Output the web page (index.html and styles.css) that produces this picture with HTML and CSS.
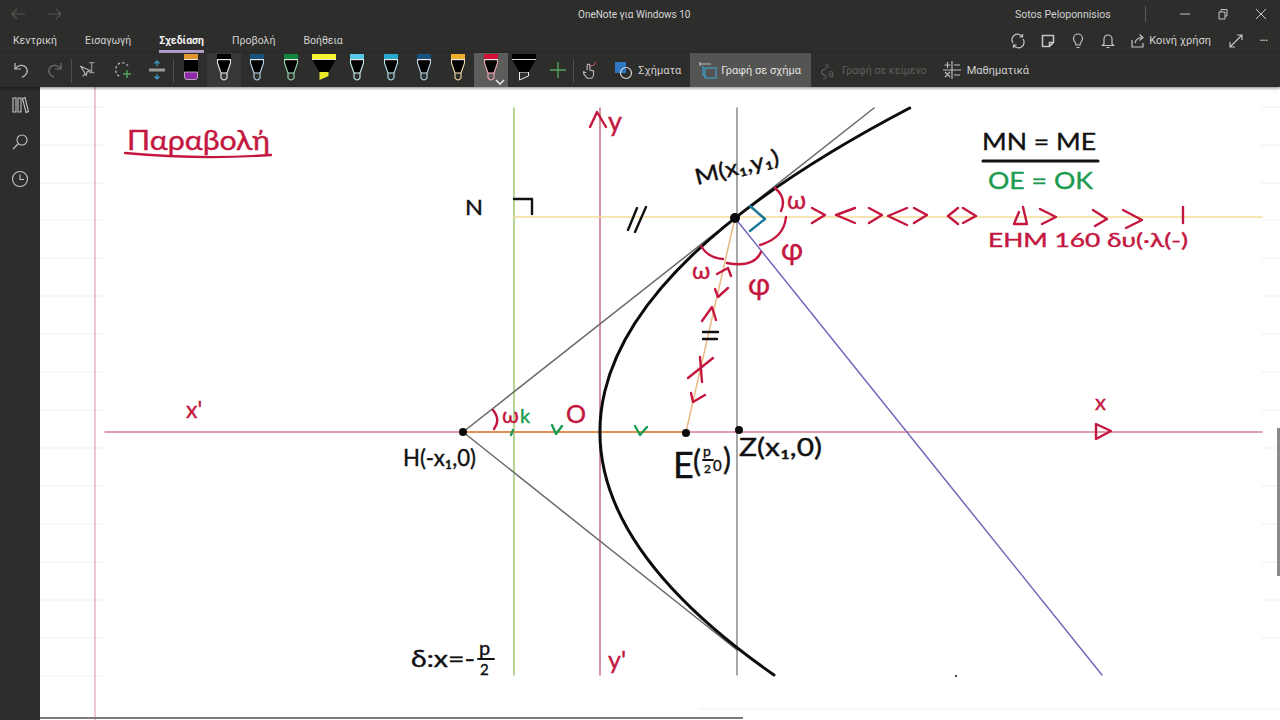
FILE: index.html
```html
<!DOCTYPE html>
<html lang="el">
<head>
<meta charset="utf-8">
<title>OneNote για Windows 10</title>
<link rel="stylesheet" href="styles.css">
</head>
<body>
<svg class="defs" width="0" height="0" aria-hidden="true">
  <symbol id="pen" viewBox="0 0 14 27">
    <path class="pen-body" d="M.5 6H13.500V9L10 19H4L.5 9Z"/>
    <path class="pen-side" d="M.5 6V9L4 19V24Q7 28 10 24V19L13.500 9V6"/>
    <path class="pen-side" d="M4 19H10"/>
    <rect class="pen-cap" x="0" y="0" width="14" height="5"/>
    <rect class="pen-band" x="0" y="5" width="14" height="1.200"/>
  </symbol>
  <symbol id="marker" viewBox="0 0 24 27">
    <path class="pen-tip" d="M7.500 18H16.500V22L7.500 26Z"/>
    <path class="pen-body" d="M0 5H24L17 18H7Z"/>
    <rect class="pen-cap" x="0" y="0" width="24" height="5"/>
    <rect class="pen-band" x="0" y="5" width="24" height="1"/>
  </symbol>
</svg>

<div class="app">
  <header class="titlebar">
    <div class="nav">
      <svg class="ico dim" viewBox="0 0 16 16"><path d="M15 8H2M7 3 2 8l5 5"/></svg>
      <svg class="ico dim" viewBox="0 0 16 16"><path d="M1 8h13M9 3l5 5-5 5"/></svg>
    </div>
    <div class="title">OneNote για Windows 10</div>
    <div class="user">Sotos Peloponnisios</div>
    <div class="title-sep"></div>
    <div class="winbtns">
      <svg class="ico-s" viewBox="0 0 12 12"><path d="M1 6h10"/></svg>
      <svg class="ico-s" viewBox="0 0 12 12"><path d="M2 4h6v7H2zM4 4V1.500h6V8H8"/></svg>
      <svg class="ico-s" viewBox="0 0 12 12"><path d="M1 1l10 10M11 1 1 11"/></svg>
    </div>
  </header>

  <div class="tabbar">
    <nav class="tabs">
      <span class="tab">Κεντρική</span>
      <span class="tab">Εισαγωγή</span>
      <span class="tab active">Σχεδίαση</span>
      <span class="tab">Προβολή</span>
      <span class="tab">Βοήθεια</span>
    </nav>
    <div class="actions">
      <svg class="ico-a" viewBox="0 0 16 16"><path d="M3 10A5.500 5.500 0 0 1 12 3.500M13 6a5.500 5.500 0 0 1-9 6.500M12.500 1v3h-3M3.500 15v-3h3"/></svg>
      <svg class="ico-a" viewBox="0 0 16 16"><path class="heavy" d="M2.500 2.500h11v7l-4 4h-7zM13.500 9.500h-4v4"/></svg>
      <svg class="ico-a" viewBox="0 0 16 16"><path d="M6 12C6 9 3.500 8.500 3.500 5.500a4.500 4.500 0 0 1 9 0C12.500 8.500 10 9 10 12zM6.500 14.500h3"/></svg>
      <svg class="ico-a" viewBox="0 0 16 16"><path d="M4 11V6a4 4 0 0 1 8 0v5l1.500 1.500h-11zM6.500 14.500h3"/></svg>
      <span class="share">
        <svg class="ico-a" viewBox="0 0 16 16"><path d="M2 7v7h11v-4M5 10c1-4 4-5.500 7-5.500M9.500 1.500l3.500 3-3.500 3"/></svg>
        <span>Κοινή χρήση</span>
      </span>
      <svg class="ico-a expand" viewBox="0 0 16 16"><path d="M2 14 14 2M9 2H14V7M2 9V14H7"/></svg>
      <span class="more">•••</span>
    </div>
  </div>

  <div class="toolbar">
    <span class="tool"><svg class="ico-t" viewBox="0 0 20 20"><path d="M4 3v6h6M4 9c3-4 8-5 11-1.500 3 4 .5 7.500-4 10"/></svg></span>
    <span class="tool off"><svg class="ico-t" viewBox="0 0 20 20"><path d="M16 3v6h-6M16 9C13 5 8 4 5 7.500c-3 4-.5 7.500 4 10"/></svg></span>
    <span class="sep"></span>
    <span class="tool"><svg class="ico-t" viewBox="0 0 22 20"><path d="M2 6l6 10 1-4 4-1zM4 17l3-3"/><path d="M11 2h6M14 2v11M11 13h6" class="fine"/></svg></span>
    <span class="tool"><svg class="ico-t" viewBox="0 0 20 20"><path class="dash" d="M15 6A6.500 6.500 0 0 0 3 8c-1 4 1 8 5 9"/><path class="plus-g" d="M14 10v8M10 14h8"/></svg></span>
    <span class="tool"><svg class="ico-t" viewBox="0 0 20 20"><path class="blue" d="M10 1v5M7.500 3.500 10 1l2.500 2.500M10 19v-5M7.500 16.500 10 19l2.500-2.500"/><path class="thick" d="M2 10h16"/></svg></span>
    <span class="sep"></span>
    <span class="tool pen-slot"><svg class="eraser" viewBox="0 0 14 26"><rect class="er-top" x="0" y="0" width="14" height="5"/><rect class="pen-band" x="0" y="5" width="14" height="1"/><rect class="er-mid" x="0" y="6" width="14" height="12"/><path class="er-bot" d="M.5 18h13v5q0 2.500-2.500 2.500H3Q.5 25.500.5 23z"/></svg></span>
    <span class="tool pen-slot hover"><svg class="pen c-black"><use href="#pen"/></svg></span>
    <span class="tool pen-slot"><svg class="pen c-navy"><use href="#pen"/></svg></span>
    <span class="tool pen-slot"><svg class="pen c-green"><use href="#pen"/></svg></span>
    <span class="tool pen-slot"><svg class="marker c-yellow"><use href="#marker"/></svg></span>
    <span class="tool pen-slot"><svg class="pen c-sky"><use href="#pen"/></svg></span>
    <span class="tool pen-slot"><svg class="pen c-cyan"><use href="#pen"/></svg></span>
    <span class="tool pen-slot"><svg class="pen c-navy"><use href="#pen"/></svg></span>
    <span class="tool pen-slot"><svg class="pen c-gold"><use href="#pen"/></svg></span>
    <span class="tool pen-slot selected"><svg class="pen c-red"><use href="#pen"/></svg><svg class="caret" viewBox="0 0 10 6"><path d="M1 1l4 4 4-4"/></svg></span>
    <span class="tool pen-slot"><svg class="marker c-black"><use href="#marker"/></svg></span>
    <span class="tool plus-slot"><svg class="ico-t plus-g" viewBox="0 0 20 20"><path d="M10 2v16M2 10h16"/></svg></span>
    <span class="sep"></span>
    <span class="tool touch"><svg class="ico-t" viewBox="0 0 20 22"><path class="red-stroke" d="M11 6c3 1 6-1 6-4"/><path d="M8 11V6a1.500 1.500 0 0 1 3 0v5l4 1v5l-2 3H8l-4-5v-2l3 1"/></svg></span>
    <span class="btn shapes">
      <svg class="ico-t" viewBox="0 0 20 20"><rect class="fill-blue" x="2" y="2" width="11" height="11"/><circle class="circ" cx="13" cy="13" r="5.500"/></svg>
      <span>Σχήματα</span>
    </span>
    <span class="btn on">
      <svg class="ico-t" viewBox="0 0 20 20"><path d="M2 4h11M2 2v4"/><rect class="blue" x="7" y="8" width="11" height="10"/><path class="blue" d="M5 6v7c0 2 1 3 3 3"/></svg>
      <span>Γραφή σε σχήμα</span>
    </span>
    <span class="btn disabled">
      <svg class="ico-t" viewBox="0 0 20 20"><path d="M8 9C3 9 2 14 6 15c3 1 2 4-1 4"/><text class="a1" x="7" y="8">a</text><text class="a2" x="10" y="16.500">a</text></svg>
      <span>Γραφή σε κείμενο</span>
    </span>
    <span class="btn math">
      <svg class="ico-t" viewBox="0 0 20 20"><path d="M10 1v18M1 10h18M5.500 2v6M2.500 5h6M12 5h6M3 12l5 5M8 12l-5 5M12 15h6"/></svg>
      <span>Μαθηματικά</span>
    </span>
  </div>

  <main class="main">
    <aside class="sidebar">
      <svg class="ico-b" viewBox="0 0 18 18"><path d="M2 2h3v14H2zM7 2h3v14H7zM11.500 2.500l2.500-1 3.500 14-2.500 1z"/></svg>
      <svg class="ico-b" viewBox="0 0 18 18"><circle cx="11" cy="7" r="5"/><path d="M7.500 10.500 2 16"/></svg>
      <svg class="ico-b" viewBox="0 0 18 18"><circle cx="9" cy="9" r="7.500"/><path d="M9 4.500V9.500h4"/></svg>
    </aside>

    <section class="page">
      <svg class="sheet" viewBox="40 87 1240 633" role="img" aria-label="Παραβολή">
        <path class="rule" d="M40 107H105M40 145H105M40 183H105M40 220H105M40 258H105M40 296H105M40 334H105M40 372H105M40 410H105M40 448H105M40 486H105M40 524H105M40 562H105M40 600H105M40 638H105M40 676H105M1262 107H1280M1262 145H1280M1262 183H1280M1262 220H1280M1262 258H1280M1262 296H1280M1262 334H1280M1262 372H1280M1262 410H1280M1262 448H1280M1262 486H1280M1262 524H1280M1262 562H1280M1262 600H1280M1262 638H1280M700 709H1280"/>
        <path class="margin" d="M95 87V720"/>

        <path class="l-green" d="M514 108V675"/>
        <path class="l-red" d="M600 108V675"/>
        <path class="l-gray" d="M737 108V675"/>
        <path class="l-yellow" d="M514 217H1262"/>
        <path class="l-axis" d="M105 432H1262"/>
        <path class="l-purple" d="M735 218 1102 675"/>
        <path class="l-orange" d="M463 432H686"/>
        <path class="l-tan" d="M686 432 735 218"/>
        <path class="l-tangent" d="M463 432 874 108M463 432 737 650"/>
        <path class="l-curve" d="M909.700 108Q367.700 391.500 774 675"/>

        <circle class="dot" cx="735" cy="218" r="5"/>
        <circle class="dot" cx="463" cy="432" r="4"/>
        <circle class="dot" cx="686" cy="433" r="4"/>
        <circle class="dot" cx="739" cy="430" r="4"/>
        <circle class="dot" cx="956" cy="676" r="1"/>

        <path class="ink-red" d="M812 208 825 215 812 223M855 208 836 215 855 223M869 208 882 215 869 223M907 208 888 216 907 225M914 208 927 215 914 223M958 208 948 216 958 224M963 208 976 216 963 223M1040 209 1056 217 1042 224M1093 210 1107 219 1095 226M1123 210 1142 220 1126 228M1183 207V223M1019 212 1014 224H1027L1023 207"/>
        <path class="ink-red" d="M775 188Q787 198 781 211M786 217Q784 238 760 245M761 252Q754 268 727 263M701 246Q708 258 723 259M493 410Q501 420 494 429"/>
        <path class="ink-red" d="M717 274 728 268 731 276M715 289 718 297 728 288M702 321 712 307 716 320M688 378 713 358M700 357 702 382M691 393 693 402 705 395"/>
        <path class="ink-red" d="M125 153Q200 160 271 155"/>
        <path class="ink-red" d="M590 127 597 112 606 127"/>
        <path class="ink-red" d="M1096 424 1111 431 1096 439Z"/>
        <path class="ink-blue" d="M750 206 765 219 750 231"/>
        <path class="ink-black" d="M628 230 637 208M635 232 646 207M514 199H532V214M703 332H718M703 339H717"/>
        <path class="ink-bar" d="M983 161H1098"/>
        <path class="ink-black thin" d="M478 659H494M703 460H713"/>
        <path class="ink-green" d="M552 425 556 434 562 426M635 426 640 435 647 427M511 435 513 430"/>

        <text class="hand red" x="127" y="150" font-size="27" textLength="143" lengthAdjust="spacingAndGlyphs">Παραβολή</text>
        <text class="hand black" x="465" y="215" font-size="22" textLength="18" lengthAdjust="spacingAndGlyphs">N</text>
        <text class="hand red" x="608" y="131" font-size="27">y</text>
        <text class="hand black" transform="rotate(-14 697 185)" x="697" y="185" font-size="22" textLength="86" lengthAdjust="spacingAndGlyphs">M(x₁,y₁)</text>
        <text class="hand black" x="982" y="150" font-size="24" textLength="114" lengthAdjust="spacingAndGlyphs">MN = ME</text>
        <text class="hand green" x="988" y="189" font-size="24" textLength="105" lengthAdjust="spacingAndGlyphs">OE = OK</text>
        <text class="hand red" x="988" y="247" font-size="19" textLength="200" lengthAdjust="spacingAndGlyphs">EHM 160 δυ(·λ(-)</text>
        <text class="hand red" x="787" y="209" font-size="25">ω</text>
        <text class="hand red" x="781" y="260" font-size="30">φ</text>
        <text class="hand red" x="748" y="295" font-size="30">φ</text>
        <text class="hand red" x="692" y="279" font-size="24">ω</text>
        <text class="hand red" x="502" y="423" font-size="22">ω</text>
        <text class="hand green" x="520" y="423" font-size="20">k</text>
        <text class="hand red" x="566" y="423" font-size="25">O</text>
        <text class="hand red" x="186" y="418" font-size="23">x'</text>
        <text class="hand red" x="1095" y="410" font-size="22">x</text>
        <text class="hand black" x="403" y="466" font-size="24" textLength="73" lengthAdjust="spacingAndGlyphs">H(-x₁,0)</text>
        <text class="hand black" x="673" y="478" font-size="36">E</text>
        <text class="hand black" x="693" y="472" font-size="30">(</text>
        <text class="hand black" x="703" y="456" font-size="14">p</text>
        <text class="hand black" x="704" y="473" font-size="12">2</text>
        <text class="hand black" x="713" y="471" font-size="15">0</text>
        <text class="hand black" x="723" y="470" font-size="30">)</text>
        <text class="hand black" x="739" y="456" font-size="25" textLength="83" lengthAdjust="spacingAndGlyphs">Z(x₁,0)</text>
        <text class="hand black" x="411" y="667" font-size="23" textLength="64" lengthAdjust="spacingAndGlyphs">δ:x=-</text>
        <text class="hand black" x="479" y="655" font-size="20">p</text>
        <text class="hand black" x="480" y="675" font-size="15">2</text>
        <text class="hand red" x="608" y="669" font-size="25">y'</text>
      </svg>
      <div class="hscroll"></div>
      <div class="vscroll"></div>
    </section>
  </main>
</div>
</body>
</html>
```
FILE: styles.css
```css
* { box-sizing: border-box; }
html, body { margin: 0; height: 100%; overflow: hidden; }
body { background: #2d2d2b; color: #dcdcdc; font: 11px "Roboto", "Liberation Sans", sans-serif; }
.defs { position: absolute; }

.app { display: flex; flex-direction: column; width: 1280px; height: 720px; }

/* title bar */
.titlebar { display: flex; align-items: center; height: 28px; flex: none; }
.nav { display: flex; gap: 21px; width: 578px; padding-left: 10px; }
.ico { width: 16px; height: 16px; fill: none; stroke: currentColor; stroke-width: 1.100; }
.dim { color: #565654; }
.title { width: 437px; color: #d8d8d8; font-size: 10px; }
.user { width: 130px; color: #d0d0d0; font-size: 10.500px; }
.title-sep { width: 1px; height: 16px; background: #5a5a58; }
.winbtns { display: flex; gap: 26px; padding-left: 33px; }
.ico-s { width: 12px; height: 12px; fill: none; stroke: #c8c8c8; stroke-width: 1; }

/* tab row */
.tabbar { display: flex; align-items: center; height: 25px; flex: none; }
.tabs { display: flex; gap: 28px; padding-left: 13px; height: 25px; font-size: 10.500px; }
.tab { display: flex; align-items: center; height: 25px; color: #d2d2d2; border-bottom: 3px solid transparent; padding-top: 2px; }
.tab.active { color: #f2f2f2; font-weight: 700; border-bottom-color: #b79fcf; }
.actions { display: flex; align-items: center; gap: 14px; margin-left: auto; padding-right: 12px; }
.ico-a { width: 16px; height: 16px; fill: none; stroke: #c4c4c4; stroke-width: 1.200; flex: none; }
.heavy { stroke-width: 1.600; }
.share { display: flex; align-items: center; gap: 3px; color: #d2d2d2; }
.expand { margin-left: 3px; }
.more { font-size: 8px; color: #dcdcdc; margin-left: 2px; }

/* toolbar */
.toolbar { position: relative; z-index: 2; display: flex; align-items: stretch; height: 34px; flex: none; padding-left: 4px; box-shadow: 0 1px 3px rgba(0, 0, 0, .5); color: #c8c8c8; }
.tool { display: flex; align-items: center; justify-content: center; width: 34px; flex: none; position: relative; }
.pen-slot { width: 33.360px; align-items: flex-start; padding-top: 1px; }
.plus-slot { width: 33.360px; }
.touch { width: 30px; }
.off { opacity: .45; }
.sep { width: 1px; margin: 6px 0 4px -1px; background: #4e4e4c; flex: none; }
.hover { background: #383836; }
.selected { background: #5c5c5a; }
.ico-t { width: 20px; height: 20px; fill: none; stroke: #bdbdbd; stroke-width: 1.200; flex: none; }
.fine { stroke-width: .9; }
.dash { stroke-dasharray: 2.500 2; }
.plus-g, .plus-g path { stroke: #4fa55c; stroke-width: 1.400; }
.blue { stroke: #3f9fd0; }
.thick { stroke: #9a9a9a; stroke-width: 3; }
.red-stroke { stroke: #b04a5e; }
.fill-blue { fill: #2d78c0; stroke: none; }
.circ { stroke: #d8d8d8; }
.a1 { font: 7px "Roboto", sans-serif; fill: currentColor; stroke: none; }
.a2 { font: 11px "Roboto", sans-serif; fill: currentColor; stroke: none; }

.eraser { width: 14px; height: 26px; }
.er-top { fill: #e0962c; }
.er-mid { fill: #000; }
.er-bot { fill: #8f2aa8; stroke: #ddd; stroke-width: .7; }

.pen { width: 14px; height: 27px; }
.marker { width: 24px; height: 27px; }
.pen-body { fill: #000; }
.pen-cap { fill: var(--cap); }
.pen-band { fill: #e6e6e6; }
.pen-tip { fill: var(--tip, none); stroke: var(--edge, none); stroke-width: 1; }
.pen-side { fill: none; stroke: var(--edge); stroke-width: 1.100; }
.c-black { --cap: #000; --edge: #ececec; }
.c-navy { --cap: #17527f; --edge: #b9d8f0; }
.c-green { --cap: #12863f; --edge: #9ad8ab; }
.c-sky { --cap: #56c8ea; --edge: #cdf0f8; }
.c-cyan { --cap: #2aa7cf; --edge: #b5e6f4; }
.c-gold { --cap: #efb02e; --edge: #f5e0a5; }
.c-red { --cap: #d10f35; --edge: #f5aab8; }
.c-yellow { --cap: #f5f52e; --tip: #eaea2c; }
.marker.c-black { --cap: #000; --tip: #2d2d2b; --edge: #ececec; }
.caret { position: absolute; right: 3px; bottom: 2px; width: 10px; height: 6px; fill: none; stroke: #e8e8e8; stroke-width: 1.500; }

.btn { display: flex; align-items: center; flex: none; color: #d0d0d0; white-space: nowrap; }
.shapes { gap: 5px; padding: 0 9px; }
.on { gap: 3px; padding: 0 10px 0 8px; background: #545452; color: #e2e2e2; }
.disabled { gap: 4px; padding: 0 11px 0 7px; color: #5e5e5c; font-size: 10.600px; }
.disabled .ico-t { stroke: #5e5e5c; }
.math { gap: 5px; padding: 0 10px 0 4px; }

/* main */
.main { display: flex; flex: 1; min-height: 0; }
.sidebar { display: flex; flex-direction: column; align-items: center; gap: 19px; width: 40px; flex: none; padding-top: 9px; }
.ico-b { width: 18px; height: 18px; fill: none; stroke: #c4c4c4; stroke-width: 1.100; }
.page { flex: 1; position: relative; background: #fff; overflow: hidden; }
.sheet { display: block; width: 1240px; height: 633px; }

.hscroll { position: absolute; left: -40px; bottom: 1px; width: 743px; height: 2px; background: #7c7c7c; }
.vscroll { position: absolute; right: 0; top: 341px; width: 3px; height: 148px; background: #8a8a8a; }

/* drawing */
.sheet path { fill: none; stroke-linecap: round; stroke-linejoin: round; }
.rule { stroke: #e6f0f6; stroke-width: 1; }
.margin { stroke: #e9b4bf; stroke-width: 1.500; }
.l-green { stroke: #9fc972; stroke-width: 1.500; }
.l-red { stroke: #c56f80; stroke-width: 1.500; }
.l-gray { stroke: #8a8a8a; stroke-width: 1.500; }
.l-yellow { stroke: #f3dc98; stroke-width: 1.500; }
.l-axis { stroke: #d5808f; stroke-width: 1.500; }
.l-purple { stroke: #6f68bb; stroke-width: 1.500; }
.l-orange { stroke: #e38f55; stroke-width: 2; }
.l-tan { stroke: #e9b981; stroke-width: 1.500; }
.l-tangent { stroke: #6a6a6a; stroke-width: 1.500; }
.l-curve { stroke: #0c0c0c; stroke-width: 3; }
.dot { fill: #0a0a0a; }
.ink-red { stroke: #c4173f; stroke-width: 2.400; }
.ink-blue { stroke: #1a7898; stroke-width: 2.400; }
.ink-black { stroke: #111; stroke-width: 2.400; }
.ink-black.thin { stroke-width: 1.800; }
.ink-bar { stroke: #111; stroke-width: 3; }
.ink-green { stroke: #1c9c50; stroke-width: 2.400; }
.hand { font-family: "Lato", "Liberation Sans", sans-serif; stroke-width: .4; }
.red { fill: #c4173f; stroke: #c4173f; }
.black { fill: #111; stroke: #111; }
.green { fill: #1c9c50; stroke: #1c9c50; }
```
